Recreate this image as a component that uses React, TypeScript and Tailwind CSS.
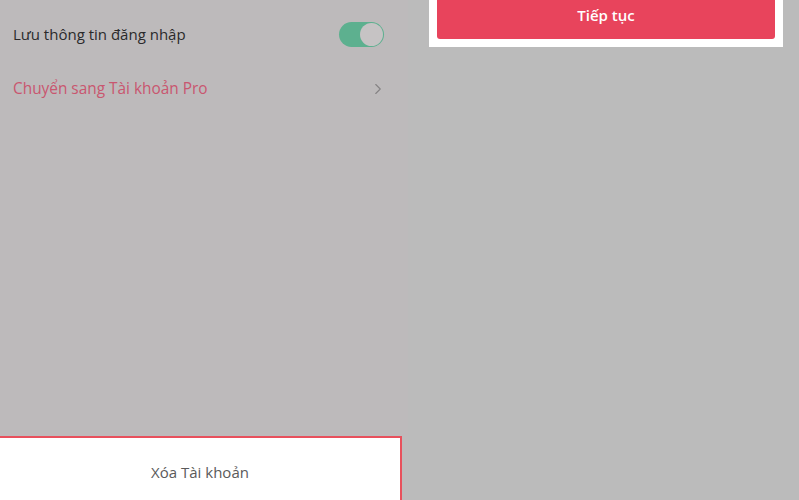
import { ChevronRight } from "lucide-react"

const font = { fontFamily: '"Open Sans", "Noto Sans", sans-serif' }

function Toggle() {
  return (
    <div className="flex h-[25px] w-[45px] items-center justify-end rounded-full bg-[#5db08f] p-[1px]">
      <div className="h-[23px] w-[23px] rounded-full bg-[#c6c3c4]" />
    </div>
  )
}

export default function App() {
  return (
    <div className="flex h-[500px] w-[799px] overflow-hidden bg-[#bbbbbb]" style={font}>
      {/* Settings column */}
      <div className="flex w-[408px] flex-col bg-[#bdbabb]">
        <div className="flex h-[68px] items-center justify-between pl-[13px] pr-[24px]">
          <span className="text-[15px] text-[#2b2a2b]">Lưu thông tin đăng nhập</span>
          <Toggle />
        </div>
        <div className="flex h-[40px] items-center justify-between pl-[13px] pr-[21px] pt-[2px]">
          <span className="text-[15.4px] text-[#c9566f]">Chuyển sang Tài khoản Pro</span>
          <ChevronRight size={18} strokeWidth={1.5} className="text-[#858384]" />
        </div>
        <div className="flex-1" />
        <div className="mr-[6px] flex h-[64px] items-center justify-center border-r-2 border-t-2 border-[#e8505c] bg-white pt-[6px]">
          <span className="text-[15px] text-[#5a5a5a]">Xóa Tài khoản</span>
        </div>
      </div>

      {/* Continue card */}
      <div className="pl-[21px]">
        <div className="w-[354px] bg-white px-[8px] pb-[8px]">
          <button className="flex h-[39px] w-full items-center justify-center rounded-b-[3px] bg-[#e8445c] pb-[8px] text-[15px] font-semibold text-white">
            Tiếp tục
          </button>
        </div>
      </div>
    </div>
  )
}
